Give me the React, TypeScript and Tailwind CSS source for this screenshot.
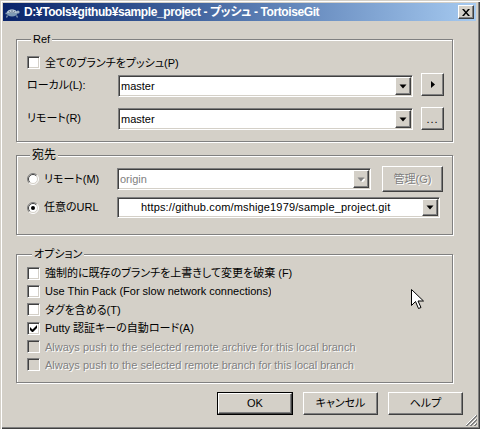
import React from "react";

const raised =
  "border border-t-white border-l-white border-r-[#404040] border-b-[#404040] shadow-[inset_-1px_-1px_0_#808080]";
const sunken =
  "border border-t-[#808080] border-l-[#808080] border-r-white border-b-white shadow-[inset_1px_1px_0_#404040,inset_-1px_-1px_0_#d4d0c8]";
const etched = "border border-[#808080] shadow-[inset_1px_1px_0_#fff,1px_1px_0_#fff]";
const grayText = "text-[#808080] [text-shadow:1px_1px_0_#fff]";

function Arrow({ disabled }: { disabled?: boolean }) {
  return (
    <svg width="8" height="5" viewBox="0 0 8 5">
      {disabled && <path d="M2 2h7L5.5 5.5z" fill="#fff" />}
      <path d="M0.5 0.5h7L4 4.5z" fill={disabled ? "#808080" : "#000"} />
    </svg>
  );
}

function DropButton({ disabled }: { disabled?: boolean }) {
  return (
    <div className={`${raised} w-[16px] h-full flex items-center justify-center bg-[#d4d0c8]`}>
      <Arrow disabled={disabled} />
    </div>
  );
}

function CheckBox({ checked, disabled }: { checked?: boolean; disabled?: boolean }) {
  return (
    <div
      className={`${sunken} w-[13px] h-[13px] shrink-0 flex items-center justify-center ${
        disabled ? "bg-[#d4d0c8]" : "bg-white"
      }`}
    >
      {checked && (
        <svg width="7" height="7" viewBox="0 0 7 7">
          <path d="M0 2v3l2 2h1l4-4V0L2.5 4.5z" fill="#000" />
        </svg>
      )}
    </div>
  );
}

function Radio({ checked }: { checked?: boolean }) {
  return (
    <svg width="12" height="12" viewBox="0 0 12 12" className="shrink-0">
      <circle cx="6" cy="6" r="5" fill="#fff" />
      <path d="M2.1 9.9A5.5 5.5 0 0 1 9.9 2.1" stroke="#808080" fill="none" />
      <path d="M9.9 2.1A5.5 5.5 0 0 1 2.1 9.9" stroke="#fff" fill="none" />
      <path d="M2.8 9.2A4.5 4.5 0 0 1 9.2 2.8" stroke="#404040" fill="none" />
      <path d="M9.2 2.8A4.5 4.5 0 0 1 2.8 9.2" stroke="#d4d0c8" fill="none" />
      {checked && <circle cx="6" cy="6" r="2" fill="#000" />}
    </svg>
  );
}

function OptionRow({
  label,
  w,
  checked,
  disabled,
}: {
  label: string;
  w: string;
  checked?: boolean;
  disabled?: boolean;
}) {
  return (
    <div className="flex items-center h-[14px]">
      <CheckBox checked={checked} disabled={disabled} />
      <span className={`ml-[5px] whitespace-nowrap overflow-hidden leading-[14px] ${w} ${disabled ? grayText : ""}`}>
        {label}
      </span>
    </div>
  );
}

function Turtle() {
  return (
    <svg width="16" height="16" viewBox="0 0 16 16">
      <ellipse cx="8" cy="9" rx="5.5" ry="3.5" fill="#7f9bb5" />
      <path d="M3 9a5 3.5 0 0 1 10 0z" fill="#b8c8d8" />
      <path d="M5 7l1.5 2M8 6v3M11 7l-1.5 2" stroke="#50657c" strokeWidth="0.8" />
      <circle cx="14" cy="8" r="1.6" fill="#9fb2c4" />
      <path d="M3.5 11.5l-1 2M12.5 11.5l1 2M1.5 9.5h1.5" stroke="#8aa0b4" strokeWidth="1.3" />
    </svg>
  );
}

export default function App() {
  return (
    <div className="w-[480px] h-[429px] relative bg-[#d4d0c8] p-[3px] flex flex-col shadow-[inset_1px_1px_0_#d4d0c8,inset_2px_2px_0_#fff,inset_-1px_-1px_0_#404040,inset_-2px_-2px_0_#808080] text-[11px] text-black font-['Liberation_Sans','Noto_Sans_CJK_JP',sans-serif] [font-feature-settings:'palt'] overflow-hidden select-none">
      {/* title bar */}
      <div className="h-[18px] flex items-center bg-linear-to-r from-[#0a246a] to-[#a6caf0] pl-[1px] pr-[2px] mr-[1px]">
        <Turtle />
        <span className="ml-[4px] text-white font-bold text-[12px] tracking-[-0.4px] leading-[18px] whitespace-nowrap">
          D:¥Tools¥github¥sample_project - プッシュ - TortoiseGit
        </span>
        <div className={`${raised} ml-auto w-[16px] h-[14px] bg-[#d4d0c8] flex items-center justify-center`}>
          <svg width="8" height="7" viewBox="0 0 8 7">
            <path d="M0 0h2l2 2.5L6 0h2L5 3.5 8 7H6L4 4.5 2 7H0l3-3.5z" fill="#000" />
          </svg>
        </div>
      </div>

      {/* Ref */}
      <fieldset className={`${etched} ml-[13px] mt-[12px] w-[437px] h-[109px] pl-[10px]`}>
        <legend className="ml-[4px] px-[2px] leading-[12px] bg-[#d4d0c8]">Ref</legend>
        <div className="flex items-center mt-[11px] h-[13px]">
          <CheckBox />
          <span className="ml-[5px] w-[134px] whitespace-nowrap overflow-hidden leading-[14px]">
            全てのブランチをプッシュ(P)
          </span>
        </div>
        <div className="flex items-start mt-[4px] h-[23px]">
          <span className="w-[91px] self-center mt-[1px]">ローカル(L):</span>
          <div className={`${sunken} mt-[2px] w-[295px] h-[22px] bg-white p-[1px] flex`}>
            <span className="flex-1 pl-[1px] leading-[18px]">master</span>
            <DropButton />
          </div>
          <div className={`${raised} ml-[8px] w-[23px] h-[23px] bg-[#d4d0c8] flex items-center justify-center`}>
            <svg width="4" height="7" viewBox="0 0 4 7">
              <path d="M0 0l4 3.5L0 7z" fill="#000" />
            </svg>
          </div>
        </div>
        <div className="flex items-start mt-[11px] h-[23px]">
          <span className="w-[91px] self-center">リモート(R)</span>
          <div className={`${sunken} mt-[1px] w-[295px] h-[22px] bg-white p-[1px] flex`}>
            <span className="flex-1 pl-[1px] leading-[18px]">master</span>
            <DropButton />
          </div>
          <div className={`${raised} ml-[8px] w-[23px] h-[23px] bg-[#d4d0c8] flex items-center justify-center`}>
            <span className="leading-none mt-[2px] tracking-[1px]">...</span>
          </div>
        </div>
      </fieldset>

      {/* 宛先 */}
      <fieldset className={`${etched} ml-[13px] mt-[7px] w-[437px] h-[86px] pl-[10px]`}>
        <legend className="ml-[3px] px-[2px] leading-[12px] bg-[#d4d0c8] text-[12px]">宛先</legend>
        <div className="flex items-center mt-[5px] h-[26px]">
          <Radio />
          <span className="ml-[5px] w-[73px]">リモート(M)</span>
          <div className={`${sunken} w-[254px] h-[22px] bg-white p-[1px] flex`}>
            <span className={`flex-1 pl-[1px] leading-[18px] ${grayText}`}>origin</span>
            <DropButton disabled />
          </div>
          <div className={`${raised} ml-[11px] w-[61px] h-[26px] bg-[#d4d0c8] flex items-center justify-center`}>
            <span className={grayText}>管理(G)</span>
          </div>
        </div>
        <div className="flex items-center mt-[5px] h-[21px]">
          <Radio checked />
          <span className="ml-[5px] w-[73px]">任意のURL</span>
          <div className={`${sunken} w-[323px] h-[21px] bg-white p-[1px] flex`}>
            <span className="flex-1 pl-[22px] leading-[17px] tracking-[0.15px] whitespace-nowrap overflow-hidden">
              https://github.com/mshige1979/sample_project.git
            </span>
            <DropButton />
          </div>
        </div>
      </fieldset>

      {/* オプション */}
      <fieldset className={`${etched} ml-[13px] mt-[13px] w-[437px] h-[135px] pl-[10px]`}>
        <legend className="ml-[5px] px-[2px] leading-[12px] bg-[#d4d0c8]">オプション</legend>
        <div className="flex flex-col justify-between mt-[6px] h-[106px]">
          <OptionRow label="強制的に既存のブランチを上書きして変更を破棄 (F)" w="w-[250px]" />
          <OptionRow label="Use Thin Pack (For slow network connections)" w="w-[226px]" />
          <OptionRow label="タグを含める(T)" w="w-[80px]" />
          <OptionRow label="Putty 認証キーの自動ロード(A)" w="w-[152px]" checked />
          <OptionRow
            label="Always push to the selected remote archive for this local branch"
            w="w-[312px]"
            disabled
          />
          <OptionRow
            label="Always push to the selected remote branch for this local branch"
            w="w-[312px]"
            disabled
          />
        </div>
      </fieldset>

      {/* buttons */}
      <div className="flex mt-[9px] ml-[214px]">
        <div className="border border-black w-[76px] h-[23px]">
          <div className={`${raised} w-full h-full flex items-center justify-center`}>OK</div>
        </div>
        <div className={`${raised} ml-[10px] w-[75px] h-[23px] flex items-center justify-center`}>
          キャンセル
        </div>
        <div className={`${raised} ml-[10px] w-[75px] h-[23px] flex items-center justify-center`}>
          ヘルプ
        </div>
      </div>

      {/* resize grip */}
      <svg width="12" height="12" viewBox="0 0 12 12" className="absolute right-[3px] bottom-[3px]">
        <path d="M11 1L1 11M11 5L5 11M11 9L9 11" stroke="#fff" />
        <path d="M12 1L1 12M12 2L2 12M12 5L5 12M12 6L6 12M12 9L9 12M12 10L10 12" stroke="#808080" />
      </svg>

      {/* mouse pointer */}
      <svg width="13" height="21" viewBox="0 0 13 21" className="absolute left-[411px] top-[289px]">
        <path d="M0.5 0.5v16l4-4 3 7 2.5-1-3-6.5h5.5z" fill="#fff" stroke="#000" strokeLinejoin="round" />
      </svg>
    </div>
  );
}
